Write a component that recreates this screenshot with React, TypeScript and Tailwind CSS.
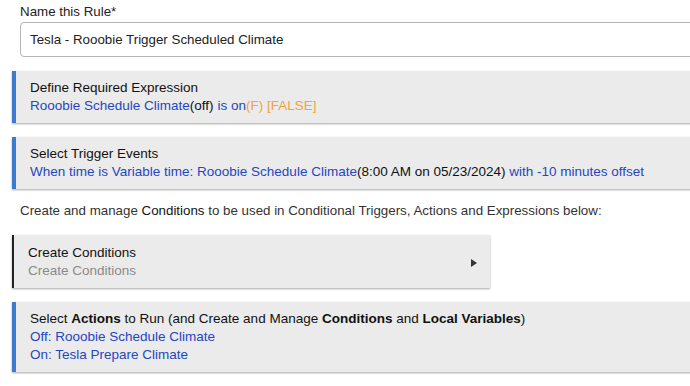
import React from "react";

const blue = "text-[#2347c2]";
const orange = "text-[#f3a33a]";

function Panel({ children }: { children: React.ReactNode }) {
  return (
    <div className="w-[700px] bg-[#ebebeb] border-l-4 border-[#3f7bcc] shadow-[0_1px_2px_rgba(0,0,0,0.35)] pl-[14px] py-2 text-[13.5px] leading-[18px]">
      {children}
    </div>
  );
}

export default function App() {
  return (
    <div className="w-[690px] h-[386px] overflow-hidden bg-white text-[#222] font-['Liberation_Sans',Arial,sans-serif]">
      <div className="pl-[20px] pt-[3px] text-[13.33px] leading-[18px] text-[#222]">Name this Rule*</div>
      <div className="ml-[20px] mt-[1px] w-[700px] h-[35px] border border-[#b5b5b5] rounded-[4px] flex items-center pl-[9px] text-[13.33px] text-[#222]">
        Tesla - Rooobie Trigger Scheduled Climate
      </div>

      <div className="ml-[12px] mt-[14px]">
        <Panel>
          <div className="text-[#111]">Define Required Expression</div>
          <div>
            <span className={blue}>Rooobie Schedule Climate</span>
            <span className="text-[#111]">(off)</span>
            <span className={blue}> is on</span>
            <span className={orange}>(F) [FALSE]</span>
          </div>
        </Panel>
      </div>

      <div className="ml-[12px] mt-[14px]">
        <Panel>
          <div className="text-[#111]">Select Trigger Events</div>
          <div>
            <span className={blue}>When time is Variable time: Rooobie Schedule Climate</span>
            <span className="text-[#111]">(8:00 AM on 05/23/2024)</span>
            <span className={blue}> with -10 minutes offset</span>
          </div>
        </Panel>
      </div>

      <div className="pl-[20px] mt-[13px] text-[13.33px] leading-[18px] text-[#333]">
        Create and manage <span className="text-[#111]">Conditions</span> to be used in Conditional Triggers, Actions and Expressions below:
      </div>

      <div className="ml-[12px] mt-[15px]">
        <div className="w-[478px] h-[53px] bg-[#ebebeb] border-l-2 border-[#222] shadow-[0_1px_2px_rgba(0,0,0,0.35)] pl-[14px] pr-[13px] flex items-center justify-between">
          <div className="text-[13.5px] leading-[18px]">
            <div className="text-[#111]">Create Conditions</div>
            <div className="text-[#8a8a8a]">Create Conditions</div>
          </div>
          <svg width="6" height="8" viewBox="0 0 6 8" className="mt-[2px]">
            <path d="M0 0 L6 4 L0 8 Z" fill="#333" />
          </svg>
        </div>
      </div>

      <div className="ml-[12px] mt-[14px]">
        <Panel>
          <div className="text-[#111]">
            Select <b>Actions</b> to Run (and Create and Manage <b>Conditions</b> and <b>Local Variables</b>)
          </div>
          <div className={blue}>Off: Rooobie Schedule Climate</div>
          <div className={blue}>On: Tesla Prepare Climate</div>
        </Panel>
      </div>
    </div>
  );
}
